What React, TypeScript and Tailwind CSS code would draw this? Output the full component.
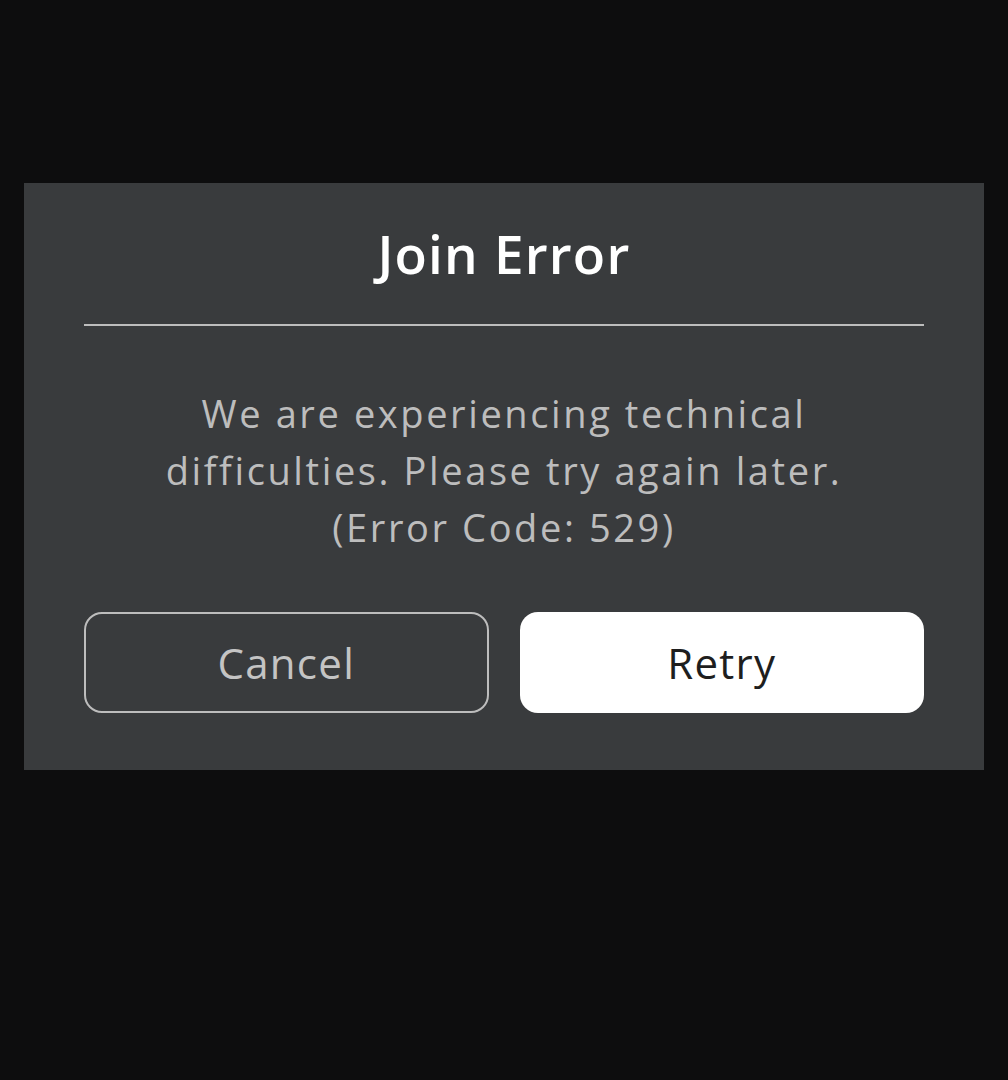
export default function App() {
  return (
    <div className="min-h-[1080px] bg-[#0d0d0e] pt-[183px] px-[24px]" style={{ fontFamily: '"Open Sans", "Noto Sans", sans-serif' }}>
      <div className="bg-[#393b3d] px-[60px] pb-[57px]">
        <div className="h-[141px] flex items-center justify-center">
          <h1 className="text-[53px] font-semibold tracking-[1.2px] text-white leading-none">Join Error</h1>
        </div>
        <div className="h-[2px] bg-[#bdbdbd]" />
        <p className="pt-[59px] text-center text-[38px] leading-[57px] tracking-[2.6px] text-[#bdbdbd]">
          We are experiencing technical
          <br />
          difficulties. Please try again later.
          <br />
          (Error Code: 529)
        </p>
        <div className="mt-[56px] grid grid-cols-2 gap-[31px]">
          <button className="h-[101px] rounded-[18px] border-2 border-[#bdbdbd] text-[42px] tracking-[1.3px] text-[#c4c4c4]">
            Cancel
          </button>
          <button className="h-[101px] rounded-[18px] bg-white text-[42px] tracking-[1.3px] text-[#1e1e1e]">
            Retry
          </button>
        </div>
      </div>
    </div>
  );
}
